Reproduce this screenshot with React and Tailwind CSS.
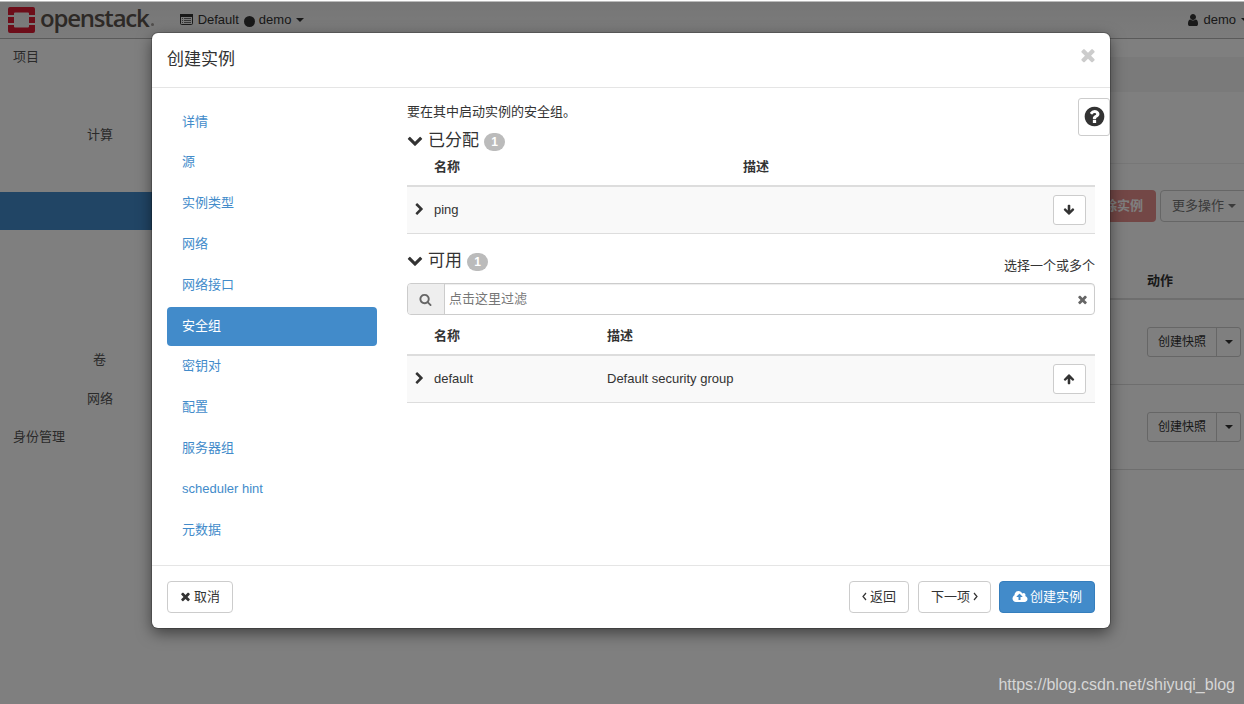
const icons = {
  times: 'M1490 1322q0 40-28 68l-136 136q-28 28-68 28t-68-28l-294-294-294 294q-28 28-68 28t-68-28l-136-136q-28-28-28-68t28-68l294-294-294-294q-28-28-28-68t28-68l136-136q28-28 68-28t68 28l294 294 294-294q28-28 68-28t68 28l136 136q28 28 28 68t-28 68l-294 294 294 294q28 28 28 68z',
  chevronDown: 'M1683 808l-742 741q-19 19-45 19t-45-19l-742-741q-19-19-19-45.5t19-45.5l166-165q19-19 45-19t45 19l531 531 531-531q19-19 45-19t45 19l166 165q19 19 19 45.5t-19 45.5z',
  chevronRight: 'M1363 877l-742 742q-19 19-45 19t-45-19l-166-166q-19-19-19-45t19-45l531-531-531-531q-19-19-19-45t19-45l166-166q19-19 45-19t45 19l742 742q19 19 19 45t-19 45z',
  arrowUp: 'M1675 971q0 51-37 90l-75 75q-38 38-91 38-54 0-90-38l-294-293v704q0 52-37.5 84.5t-90.5 32.5h-128q-53 0-90.5-32.5t-37.5-84.5v-704l-294 293q-36 38-90 38t-90-38l-75-75q-38-38-38-90 0-53 38-91l651-651q35-37 90-37 54 0 91 37l651 651q37 39 37 91z',
  arrowDown: 'M1675 832q0 53-37 90l-651 652q-39 37-91 37-53 0-90-37l-651-652q-38-36-38-90 0-53 38-91l74-75q39-37 91-37 53 0 90 37l294 294v-704q0-52 38-90t90-38h128q52 0 90 38t38 90v704l294-294q37-37 90-37 52 0 91 37l75 75q37 39 37 91z',
  search: 'M1216 832q0-185-131.5-316.5t-316.5-131.5-316.5 131.5-131.5 316.5 131.5 316.5 316.5 131.5 316.5-131.5 131.5-316.5zm512 832q0 52-38 90t-90 38q-54 0-90-38l-343-342q-179 124-399 124-143 0-273.5-55.5t-225-150-150-225-55.5-273.5 55.5-273.5 150-225 225-150 273.5-55.5 273.5 55.5 225 150 150 225 55.5 273.5q0 220-124 399l343 343q37 37 37 90z',
  question: 'M1024 1376v-192q0-14-9-23t-23-9h-192q-14 0-23 9t-9 23v192q0 14 9 23t23 9h192q14 0 23-9t9-23zm256-672q0-88-55.5-163t-138.5-116-170-41q-243 0-371 213-15 24 8 42l132 100q7 6 19 6 16 0 25-12 53-68 86-92 34-24 86-24 48 0 85.5 26t37.5 59q0 38-20 61t-68 45q-63 28-115.5 86.5t-52.5 125.5v36q0 14 9 23t23 9h192q14 0 23-9t9-23q0-19 21.5-49.5t54.5-49.5q32-18 49-28.5t46-35 44.5-48 28-60.5 12.5-81zm384 192q0 209-103 385.5t-279.5 279.5-385.5 103-385.5-103-279.5-279.5-103-385.5 103-385.5 279.5-279.5 385.5-103 385.5 103 279.5 279.5 103 385.5z',
  cloud: 'M1216 864q0-14-9-23l-352-352q-9-9-23-9t-23 9l-351 351q-10 12-10 24 0 14 9 23t23 9h224v352q0 13 9.5 22.5t22.5 9.5h192q13 0 22.5-9.5t9.5-22.5v-352h224q13 0 22.5-9.5t9.5-22.5zm640 288q0 159-112.5 271.5t-271.5 112.5h-1088q-185 0-316.5-131.5t-131.5-316.5q0-130 70-240t188-165q-2-30-2-43 0-212 150-362t362-150q156 0 285.5 87t188.5 231q71-62 166-62 106 0 181 75t75 181q0 76-41 138 130 31 213.5 135.5t83.5 238.5z',
  user: 'M1536 1399q0 109-62.5 187t-150.5 78h-854q-88 0-150.5-78t-62.5-187q0-85 8.5-160.5t31.5-152 58.5-131 94-89 134.5-34.5q131 128 313 128t313-128q76 0 134.5 34.5t94 89 58.5 131 31.5 152 8.5 160.5zm-256-887q0 159-112.5 271.5t-271.5 112.5-271.5-112.5-112.5-271.5 112.5-271.5 271.5-112.5 271.5 112.5 112.5 271.5z',
}

function Icon({ name, size = 13, className = '' }) {
  return (
    <svg width={size} height={size} viewBox="0 0 1792 1792" fill="currentColor" className={`shrink-0 overflow-visible ${className}`}>
      <path d={icons[name]} />
    </svg>
  )
}

function Caret() {
  return (
    <svg width="8" height="4" viewBox="0 0 8 4" fill="currentColor" className="shrink-0">
      <path d="M0 0h8L4 4z" />
    </svg>
  )
}

function Angle({ d }) {
  return (
    <svg width="5" height="9" viewBox="0 0 5 9" fill="none" stroke="currentColor" strokeWidth="1.2" className="shrink-0">
      <path d={d} />
    </svg>
  )
}

function Logo() {
  return (
    <div className="flex items-center">
      <svg width="27" height="26" viewBox="0 0 27 26" fill="#da1a32">
        <path d="M2 0h23a2 2 0 0 1 2 2v6h-6V6.500a1 1 0 0 0-1-1H7a1 1 0 0 0-1 1V8H0V2a2 2 0 0 1 2-2z" />
        <path d="M0 10h6v6H0zM21 10h6v6h-6z" />
        <path d="M0 18h6v1.500a1 1 0 0 0 1 1h13a1 1 0 0 0 1-1V18h6v6a2 2 0 0 1-2 2H2a2 2 0 0 1-2-2z" />
      </svg>
      <span className="ml-[5px] -mt-[5px] font-['Open_Sans'] text-[24px] leading-[26px] font-semibold tracking-[-1.2px] text-[#5a524c]">openstack</span>
      <span className="mt-[9px] ml-[2px] size-[3px] rounded-full bg-[#a09c98]" />
    </div>
  )
}

function TopBar() {
  return (
    <header className="flex h-[37px] shrink-0 items-center border-b border-[#b5b5b5] bg-linear-to-b from-[#ededed] to-[#f8f8f8] pl-2 text-[#333]">
      <Logo />
      <div className="ml-[26px] flex items-center">
        <svg width="13" height="11" viewBox="0 0 13 11" fill="none" stroke="currentColor" className="-mt-0.5">
          <rect x=".5" y=".5" width="12" height="10" rx="1" />
          <path d="M0 1.500h13" strokeWidth="3" />
          <path d="M2 4.500h1M4 4.500h7M2 6.500h1M4 6.500h7M2 8.500h1M4 8.500h7" strokeOpacity=".7" />
        </svg>
        <span className="ml-[5px]">Default</span>
        <span className="mt-0.5 mr-1 ml-[5px] size-[11px] rounded-full bg-[#333]" />
        <span className="mr-[5px]">demo</span>
        <Caret />
      </div>
      <div className="ml-auto flex items-center">
        <Icon name="user" size={14} className="-mt-px" />
        <span className="mr-[5px] ml-[3px]">demo</span>
        <div className="w-[3px] overflow-hidden"><Caret /></div>
      </div>
    </header>
  )
}

function Sidebar() {
  return (
    <aside className="flex w-[152px] shrink-0 flex-col text-[#555]">
      <div className="flex h-[38px] items-center pb-0.5 pl-[13px]">项目</div>
      <div className="mt-[38px] flex h-[39px] items-center justify-end pr-[39px]">计算</div>
      <div className="mt-[38px] h-[38px] bg-[#428bca]" />
      <div className="mt-[110px] flex h-[39px] items-center justify-end pr-[46px]">卷</div>
      <div className="flex h-[39px] items-center justify-end pr-[39px]">网络</div>
      <div className="flex h-[39px] items-center pb-px pl-[13px]">身份管理</div>
    </aside>
  )
}

function InstanceRow() {
  return (
    <div className="flex h-[85px] items-center justify-end border-b border-[#ddd] pr-[3px]">
      <div className="flex h-[30px] w-[94px] rounded-[3px] border border-[#ccc] text-xs text-[#333]">
        <span className="flex flex-1 items-center justify-center">创建快照</span>
        <span className="flex w-[24px] items-center justify-center border-l border-[#ccc]"><Caret /></span>
      </div>
    </div>
  )
}

function Instances() {
  return (
    <main className="min-w-0 flex-1 pt-[18px]">
      <div className="h-[35px] bg-[#f5f5f5]" />
      <div className="h-[72px] border-b border-[#eee]" />
      <div className="mt-[26px] flex h-8 justify-end gap-1">
        <button className="flex w-[90px] items-center justify-end rounded bg-[#e68f8d] pr-[13px] pb-px font-bold text-white">删除实例</button>
        <button className="-mr-[5px] flex w-[89px] items-center gap-1 rounded border border-[#ccc] pb-px pl-[11px] text-[#777]">
          更多操作
          <Caret />
        </button>
      </div>
      <div className="mt-[39px] flex h-[39px] items-center justify-end border-b-2 border-[#ddd] pt-0.5 pr-[71px] font-bold text-[#333]">动作</div>
      <InstanceRow />
      <InstanceRow />
    </main>
  )
}

const steps = ['详情', '源', '实例类型', '网络', '网络接口', '安全组', '密钥对', '配置', '服务器组', 'scheduler hint', '元数据']

function Steps() {
  return (
    <nav className="flex w-[210px] shrink-0 flex-col gap-0.5 pt-[15px]">
      {steps.map((step) => (
        <a
          key={step}
          className={`flex h-[38.8px] items-center rounded pb-0.5 pl-[15px] ${step === '安全组' ? 'bg-[#428bca] text-white' : 'text-[#428bca]'}`}
        >
          {step}
        </a>
      ))}
    </nav>
  )
}

function SectionTitle({ title, count }) {
  return (
    <div className="flex items-center">
      <Icon name="chevronDown" size={16} />
      <span className="mt-0.5 ml-[5px] text-[17px] leading-6">{title}</span>
      <span className="mt-[3px] ml-[5px] flex h-[18px] w-[21px] items-center justify-center rounded-full bg-[#bbb] text-xs font-bold text-white">{count}</span>
    </div>
  )
}

function GroupTable({ nameWidth, name, description, icon }) {
  return (
    <div>
      <div className="flex h-[38px] items-center border-b-2 border-[#ddd] pl-[27px] font-bold">
        <span className={nameWidth}>名称</span>
        <span>描述</span>
      </div>
      <div className="flex h-[47px] items-center border-b border-[#ddd] bg-[#f9f9f9] pr-[9px] pl-[6px]">
        <Icon name="chevronRight" className="-mt-0.5" />
        <span className={`ml-[8px] ${nameWidth}`}>{name}</span>
        <span>{description}</span>
        <button className="ml-auto flex h-[30px] w-[33px] items-center justify-center rounded-[3px] border border-[#ccc] bg-white pr-px pb-px">
          <Icon name={icon} size={12} />
        </button>
      </div>
    </div>
  )
}

function SecurityGroups() {
  return (
    <section className="ml-[30px] w-[688px] pt-[14px]">
      <p className="h-[19px] leading-[19px]">要在其中启动实例的安全组。</p>
      <div className="mt-[6px] h-[22px]">
        <SectionTitle title="已分配" count={1} />
      </div>
      <GroupTable nameWidth="w-[309px]" name="ping" icon="arrowDown" />
      <div className="mt-[13px] flex h-9 items-start justify-between">
        <SectionTitle title="可用" count={1} />
        <span className="mt-[9px] leading-[19px]">选择一个或多个</span>
      </div>
      <div className="flex h-8 items-center rounded border border-[#ccc] shadow-[inset_0_1px_1px_rgba(0,0,0,0.075)]">
        <span className="flex h-full w-[37px] items-center justify-center rounded-l-[3px] border-r border-[#ccc] bg-[#eee] pr-0.5 text-[#666]">
          <Icon name="search" />
        </span>
        <input className="h-full flex-1 pb-0.5 pl-1 outline-none placeholder:text-[#777]" placeholder="点击这里过滤" />
        <Icon name="times" className="mr-[5px] text-[#666]" />
      </div>
      <div className="mt-[3px]">
        <GroupTable nameWidth="w-[173px]" name="default" description="Default security group" icon="arrowUp" />
      </div>
    </section>
  )
}

function LaunchModal() {
  return (
    <div className="flex h-[595px] w-[958px] flex-col rounded-md bg-white text-[#333] shadow-[0_5px_15px_rgba(0,0,0,0.5),0_0_0_1px_rgba(0,0,0,0.2)]">
      <div className="flex h-[55px] shrink-0 items-center justify-between border-b border-[#e5e5e5] px-[15px]">
        <h4 className="text-[17px]">创建实例</h4>
        <Icon name="times" size={20} className="-mt-2.5 -mr-[3px] text-[#ccc]" />
      </div>
      <div className="relative flex flex-1 pl-[15px]">
        <Steps />
        <SecurityGroups />
        <button className="absolute top-[10px] right-0 flex h-[38px] w-8 items-center justify-center rounded-[3px] border border-[#ccc] bg-white pb-0.5">
          <Icon name="question" size={23} />
        </button>
      </div>
      <div className="flex h-[63px] shrink-0 items-center border-t border-[#e5e5e5] px-[15px]">
        <button className="mr-auto flex h-8 w-[66px] items-center justify-center gap-0.5 rounded border border-[#ccc] pr-px pb-px">
          <Icon name="times" />
          取消
        </button>
        <button className="flex h-8 w-[60px] items-center justify-center gap-[3px] rounded border border-[#ccc] pb-px">
          <Angle d="M4 1L1 4.500L4 8" />
          返回
        </button>
        <button className="ml-[9px] flex h-8 w-[73px] items-center justify-center gap-[3px] rounded border border-[#ccc] pb-px">
          下一项
          <Angle d="M1 1l3 3.500L1 8" />
        </button>
        <button className="ml-2 flex h-8 w-24 items-center justify-center gap-[3px] rounded border border-[#357ebd] bg-[#428bca] pb-px pl-px text-white">
          <Icon name="cloud" size={14} />
          创建实例
        </button>
      </div>
    </div>
  )
}

export default function App() {
  return (
    <div className="flex h-[704px] w-[1244px] flex-col overflow-hidden bg-white font-['Liberation_Sans','Noto_Sans_CJK_SC',sans-serif] text-[13px]">
      <div className="h-0.5 shrink-0 border-b border-[#bbb] bg-white" />
      <div className="relative flex flex-1 flex-col">
        <TopBar />
        <div className="flex flex-1">
          <Sidebar />
          <Instances />
        </div>
        <div className="absolute inset-0 bg-black/50 pt-[31px] pl-[152px]">
          <LaunchModal />
        </div>
        <span className="absolute right-[9px] bottom-[9px] text-base leading-5 text-[#d6d6d6]">https://blog.csdn.net/shiyuqi_blog</span>
      </div>
    </div>
  )
}
